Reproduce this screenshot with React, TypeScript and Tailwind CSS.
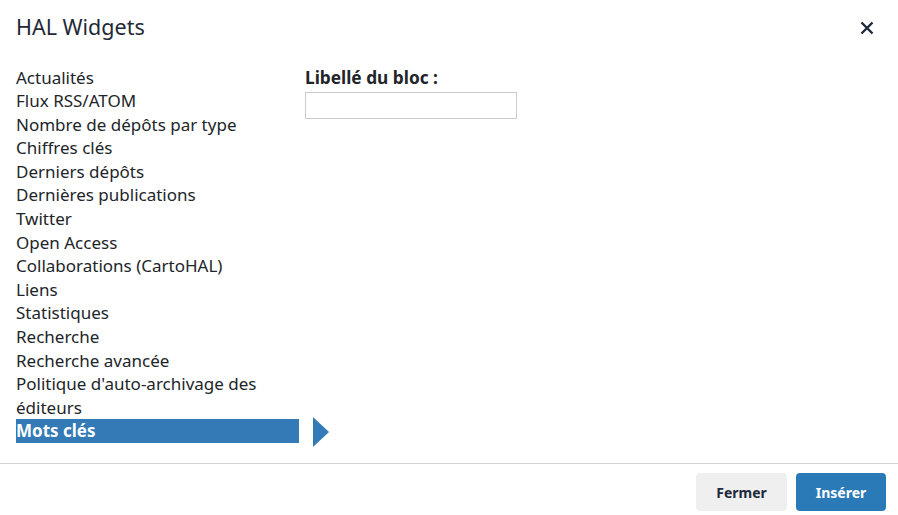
import { useState } from "react";

const widgets = [
  "Actualités",
  "Flux RSS/ATOM",
  "Nombre de dépôts par type",
  "Chiffres clés",
  "Derniers dépôts",
  "Dernières publications",
  "Twitter",
  "Open Access",
  "Collaborations (CartoHAL)",
  "Liens",
  "Statistiques",
  "Recherche",
  "Recherche avancée",
  "Politique d'auto-archivage des éditeurs",
  "Mots clés",
];

export default function App() {
  const [selected, setSelected] = useState("Mots clés");

  return (
    <div
      className="flex h-[515px] w-full flex-col bg-white text-[#212529]"
      style={{ fontFamily: '"Noto Sans", "Open Sans", sans-serif' }}
    >
      <div className="flex h-[55px] items-center justify-between pl-[16px] pr-[24px]">
        <h1 className="text-[21.5px] font-normal text-[#1f2937]">HAL Widgets</h1>
        <button className="text-[#1e293b]" aria-label="Fermer">
          <svg width="14" height="14" viewBox="0 0 14 14">
            <path d="M1.5 1.5 L12.5 12.5 M12.5 1.5 L1.5 12.5" stroke="currentColor" strokeWidth="2.4" />
          </svg>
        </button>
      </div>

      <div className="flex flex-1 gap-[6px] pl-[16px] pt-[10.5px]">
        <ul className="w-[283px] text-[17px] leading-[23.6px]">
          {widgets.map((w) => (
            <li key={w}>
              <button
                onClick={() => setSelected(w)}
                className={
                  w === selected
                    ? "relative w-full bg-[#337ab7] text-left font-bold text-white"
                    : "w-full text-left"
                }
              >
                {w}
                {w === selected && (
                  <span className="absolute left-[297px] top-[-2px] h-0 w-0 border-y-[15px] border-l-[16px] border-y-transparent border-l-[#337ab7]" />
                )}
              </button>
            </li>
          ))}
        </ul>

        <div className="flex flex-col">
          <label className="text-[17.3px] font-bold leading-[23.6px]">Libellé du bloc :</label>
          <input type="text" className="mt-[3px] h-[27px] w-[212px] border border-[#ccc] outline-none" />
        </div>
      </div>

      <div className="flex justify-end gap-[9px] border-t border-[#d4d4d4] pb-[4px] pr-[12px] pt-[9px]">
        <button className="h-[38px] w-[91px] rounded-[4px] bg-[#efefef] text-[14px] font-bold text-[#1e293b]">
          Fermer
        </button>
        <button className="h-[38px] w-[90px] rounded-[4px] bg-[#2a7ab8] text-[14px] font-bold text-white">
          Insérer
        </button>
      </div>
    </div>
  );
}
